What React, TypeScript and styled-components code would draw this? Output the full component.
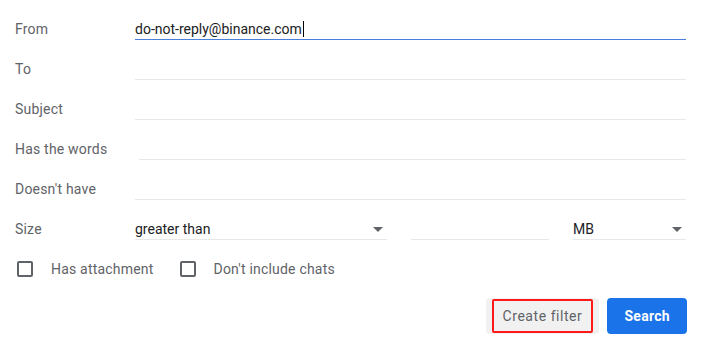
import React from "react";
import styled, { createGlobalStyle } from "styled-components";

const GlobalStyle = createGlobalStyle`
  html, body {
    margin: 0;
    padding: 0;
    background: #ffffff;
  }
  body {
    font-family: Roboto, "Liberation Sans", Arial, sans-serif;
    font-size: 14px;
  }
`;

const Form = styled.div`
  width: 706px;
  box-sizing: border-box;
  padding: 9px 20px 0 15px;
  display: flex;
  flex-direction: column;
`;

const Row = styled.div`
  display: grid;
  grid-template-columns: 120px 1fr;
  align-items: center;
  height: 40px;
`;

const Label = styled.div`
  color: #5f6368;
  font-size: 14px;
  line-height: 20px;
  letter-spacing: 0.2px;
`;

const Field = styled.div<{ $active?: boolean; $indent?: number }>`
  position: relative;
  height: 20px;
  margin-top: 1px;
  margin-left: ${(p) => p.$indent ?? 0}px;
  border-bottom: 1px solid ${(p) => (p.$active ? "#4a7fdc" : "#e8e8e8")};
  color: #202124;
  font-size: 14px;
  line-height: 20px;
  display: flex;
  align-items: center;
`;

const Caret = styled.span`
  display: inline-block;
  width: 1px;
  height: 16px;
  background: #000;
  margin-left: 1px;
`;

const SizeGroup = styled.div`
  display: grid;
  grid-template-columns: 252px 138px 1fr;
  column-gap: 24px;
  align-items: center;
`;

const Select = styled(Field)`
  justify-content: space-between;
`;

const Arrow = styled.span`
  width: 0;
  height: 0;
  border-left: 5px solid transparent;
  border-right: 5px solid transparent;
  border-top: 5px solid #5f6368;
  margin-right: 4px;
  margin-top: 1px;
`;

const CheckRow = styled.div`
  display: flex;
  align-items: center;
  height: 40px;
  padding-left: 2px;
`;

const CheckItem = styled.label`
  display: flex;
  align-items: center;
  margin-right: 26px;
  color: #5f6368;
  font-size: 14px;
  line-height: 20px;
  letter-spacing: 0.2px;
`;

const Box = styled.span`
  width: 16px;
  height: 16px;
  box-sizing: border-box;
  border: 2px solid #5f6368;
  border-radius: 2px;
  margin-right: 18px;
`;

const Actions = styled.div`
  display: flex;
  justify-content: flex-end;
  gap: 8px;
  margin-top: 9px;
  margin-right: -1px;
`;

const Button = styled.button<{ $primary?: boolean }>`
  position: relative;
  height: 36px;
  padding: 0 17px;
  border: none;
  border-radius: 4px;
  font-family: Roboto, "Liberation Sans", Arial, sans-serif;
  font-size: 14px;
  font-weight: ${(p) => (p.$primary ? 700 : 400)};
  letter-spacing: ${(p) => (p.$primary ? 0.3 : 0.55)}px;
  background: ${(p) => (p.$primary ? "#1a73e8" : "#f1f1f1")};
  color: ${(p) => (p.$primary ? "#ffffff" : "#5f6368")};
  cursor: pointer;
`;

const Highlight = styled.span`
  position: absolute;
  left: 6px;
  right: 6px;
  top: 1px;
  bottom: 1px;
  border: 2px solid #ff1a1a;
  border-radius: 2px;
  pointer-events: none;
`;

const textRows = [
  { label: "From", value: "do-not-reply@binance.com", active: true },
  { label: "To" },
  { label: "Subject" },
  { label: "Has the words", indent: 4 },
  { label: "Doesn't have" },
];

export default function App() {
  return (
    <>
      <GlobalStyle />
      <Form>
        {textRows.map((r) => (
          <Row key={r.label}>
            <Label>{r.label}</Label>
            <Field $active={r.active} $indent={r.indent}>
              {r.value}
              {r.active && <Caret />}
            </Field>
          </Row>
        ))}
        <Row>
          <Label>Size</Label>
          <SizeGroup>
            <Select>
              greater than
              <Arrow />
            </Select>
            <Field />
            <Select>
              MB
              <Arrow />
            </Select>
          </SizeGroup>
        </Row>
        <CheckRow>
          <CheckItem>
            <Box />
            Has attachment
          </CheckItem>
          <CheckItem>
            <Box />
            Don't include chats
          </CheckItem>
        </CheckRow>
        <Actions>
          <Button>
            Create filter
            <Highlight />
          </Button>
          <Button $primary>Search</Button>
        </Actions>
      </Form>
    </>
  );
}
